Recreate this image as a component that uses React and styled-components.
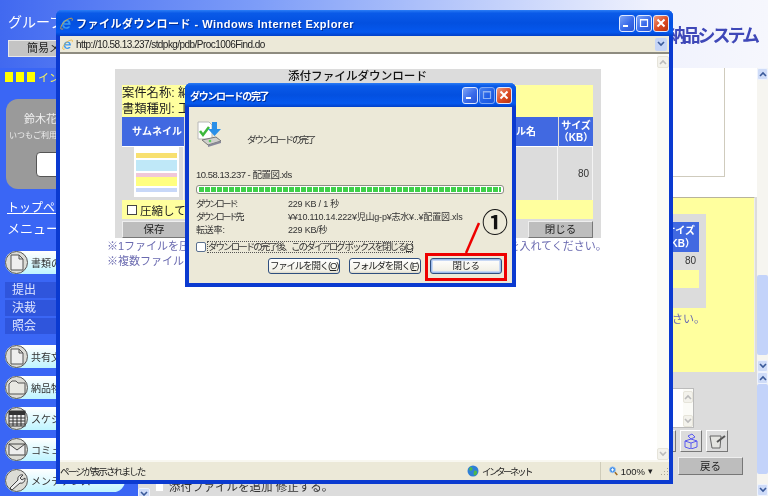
import styled, { createGlobalStyle } from 'styled-components';

const Global = createGlobalStyle`
  html, body { margin: 0; padding: 0; background: #fff; }
  body { font-family: "Liberation Sans", "Noto Sans CJK JP", sans-serif; }
  * { box-sizing: border-box; }
`;

const Page = styled.div`
  position: relative;
  width: 768px;
  height: 496px;
  overflow: hidden;
  display: grid;
  grid-template-columns: 138px 1fr;
  grid-template-rows: 68px 1fr;
  background: #3a66f5;
  filter: blur(0.35px);
`;

/* ---------- page behind the popups ---------- */

const Header = styled.header`
  grid-column: 1 / 3;
  display: flex;
  justify-content: flex-end;
  padding: 24px 11px 0 0;
  background: linear-gradient(90deg, #4169f0 0%, #7c9cf8 33%, #c6d3fb 66%, #f0f2fd 85%, #f6f7fd 100%);
`;

const Logo = styled.div`
  font-size: 18px;
  line-height: 24px;
  font-weight: 700;
  letter-spacing: -3px;
  color: #3f48b8;
`;

const Sidebar = styled.nav`
  display: flex;
  flex-direction: column;
  margin-top: -68px;
  padding: 14px 13px 0 5px;
`;

const GroupTitle = styled.div`
  color: #fff;
  font-size: 14px;
  line-height: 16px;
  padding-left: 3px;
  white-space: nowrap;
`;

const EasyButton = styled.div`
  margin: 10px 0 0 3px;
  height: 17px;
  width: 80px;
  background: #c4c4c4;
  border: 1px solid #e8e8e8;
  font-size: 11px;
  line-height: 15px;
  padding-left: 18px;
  color: #222;
  white-space: nowrap;
`;

const InfoLine = styled.div`
  display: flex;
  align-items: center;
  gap: 3px;
  margin-top: 14px;
  color: #f4f060;
  font-size: 11px;
  height: 12px;
  white-space: nowrap;
`;

const YellowSquare = styled.i`
  width: 8px;
  height: 10px;
  flex: none;
  background: #ffff00;
`;

const UserCard = styled.div`
  margin: 16px 0 0 1px;
  height: 90px;
  border-radius: 12px;
  background: #9a9a9a;
  color: #eee;
  padding: 11px 0 0 18px;
  font-size: 11px;
  white-space: nowrap;
`;

const UserHint = styled.div`
  font-size: 8px;
  margin: 3px 0 0 -15px;
`;

const UserButton = styled.div`
  width: 40px;
  height: 25px;
  margin: 12px 0 0 12px;
  background: #fff;
  border: 1px solid #555;
  border-radius: 4px;
`;

const TopLink = styled.div`
  margin-top: 12px;
  color: #fff;
  font-size: 12px;
  line-height: 14px;
  padding-left: 2px;
  text-decoration: underline;
`;

const MenuLabel = styled.div`
  margin-top: 6px;
  margin-bottom: 15px;
  color: #fff;
  font-size: 13px;
  line-height: 15px;
  padding-left: 2px;
`;

const Pill = styled.div`
  display: flex;
  align-items: center;
  gap: 3px;
  height: 23px;
  margin-bottom: 8px;
  border-radius: 12px;
  background: linear-gradient(180deg, #ffffff, #bff4ff);
  color: #333;
  font-size: 10px;
  white-space: nowrap;
`;

const RoundIcon = styled.span`
  width: 23px;
  height: 23px;
  flex: none;
  display: flex;
  align-items: center;
  justify-content: center;
  border-radius: 50%;
  border: 1px solid #555;
  background: #dcdcd6;
`;

const SubList = styled.div`
  margin-bottom: 9px;
`;

const SubItem = styled.div`
  height: 16px;
  margin-bottom: 2px;
  padding-left: 7px;
  background: #2f55dc;
  color: #dfe6ff;
  font-size: 12px;
  line-height: 16px;
`;

const Main = styled.main`
  display: grid;
  grid-template-columns: 1fr 11px;
  background: #dcdcdc;
  min-height: 0;
`;

const MainScroll = styled.div`
  display: flex;
  flex-direction: column;
  background: #f6f5f0;
`;

const MainBody = styled.div`
  display: flex;
  flex-direction: column;
  align-items: stretch;
`;

const UpperBlock = styled.div`
  height: 129px;
  flex: none;
  display: flex;
  background: #fff;
  padding-bottom: 20px;
`;

const MemoBox = styled.div`
  width: 587px;
  background: #fff;
  border-right: 1px solid #cfcbbd;
  border-bottom: 1px solid #cfcbbd;
`;

const YellowBlock = styled.div`
  height: 175px;
  flex: none;
  background: #ffff9e;
  border-top: 1px solid #b8b49c;
  border-right: 1px solid #eee;
  display: flex;
  flex-direction: column;
  align-items: flex-start;
  padding: 16px 0 0 0;
  margin-right: 2px;
`;

const BackTable = styled.div`
  margin-left: 470px;
  width: 98px;
  height: 94px;
  background: #dcdcdc;
  padding: 8px 7px 0 0;
`;

const BackHead = styled.div`
  height: 30px;
  background: #4169e1;
  color: #fff;
  font-size: 10px;
  font-weight: 700;
  line-height: 13px;
  text-align: right;
  padding: 2px 4px 0 0;
`;

const BackCell = styled.div`
  height: 18px;
  text-align: right;
  padding-right: 3px;
  font-size: 10px;
  line-height: 18px;
  color: #333;
`;

const BackYellow = styled.div`
  height: 18px;
  background: #ffff9e;
`;

const BackNote = styled.div`
  margin: 3px 0 0 512px;
  font-size: 11px;
  line-height: 16px;
  color: #6a6ab0;
  white-space: nowrap;
`;

const LowerBlock = styled.div`
  flex: 1;
  position: relative;
  display: flex;
  flex-direction: column;
  align-items: flex-end;
  padding: 16px 14px 0 0;
`;

const SmallMemo = styled.div`
  width: 50px;
  height: 40px;
  margin-right: 49px;
  background: #fff;
  border: 1px solid #bbb;
  display: flex;
  justify-content: flex-end;
`;

const ToolRow = styled.div`
  display: flex;
  gap: 4px;
  margin: 2px 15px 0 0;
`;

const ToolButton = styled.div`
  width: 22px;
  height: 22px;
  background: #dcdcdc;
  border: 1px solid #fff;
  border-right-color: #777;
  border-bottom-color: #777;
  display: flex;
  align-items: center;
  justify-content: center;
`;

const BackButton = styled.div`
  width: 65px;
  height: 18px;
  margin-top: 5px;
  background: #bdbdbd;
  border: 1px solid #eee;
  border-right-color: #777;
  border-bottom-color: #777;
  text-align: center;
  font-size: 10.500px;
  line-height: 16px;
  color: #222;
`;

const BottomOption = styled.div`
  position: absolute;
  left: 0;
  bottom: 0;
  height: 20px;
  display: flex;
  align-items: flex-start;
  gap: 5px;
  font-size: 11.500px;
  line-height: 15px;
  color: #333;
  white-space: nowrap;
`;

const BottomArrow = styled.div`
  align-self: flex-end;
  width: 12px;
  height: 12px;
  display: flex;
  align-items: center;
  justify-content: center;
  background: #cfdcf8;
  border: 1px solid #eef3fe;
  border-radius: 2px;
`;

const BottomCheck = styled.span`
  width: 9px;
  height: 9px;
  margin-top: 3px;
  background: #fff;
  border: 1px solid #ddd;
`;

const ScrollBtn = styled.div`
  height: 12px;
  flex: none;
  display: flex;
  align-items: center;
  justify-content: center;
  background: ${(p) => (p.$muted ? '#f3f2ec' : '#cfdcf8')};
  border: 1px solid ${(p) => (p.$muted ? '#e6e4da' : '#eef3fe')};
  border-radius: 2px;
`;

const ScrollThumb = styled.div`
  flex: ${(p) => (p.$h ? 'none' : 1)};
  height: ${(p) => (p.$h ? p.$h + 'px' : 'auto')};
  background: ${(p) => (p.$empty ? 'transparent' : '#c3d3fa')};
  border-radius: 2px;
`;

/* ---------- shared XP chrome ---------- */

const XpWindow = styled.div`
  position: absolute;
  display: flex;
  flex-direction: column;
  left: ${(p) => p.$left}px;
  top: ${(p) => p.$top}px;
  width: ${(p) => p.$w}px;
  height: ${(p) => p.$h}px;
  background: #0b3ad0;
  border-radius: 6px 6px 0 0;
  padding: 0 4px 4px;
  box-shadow: inset 0 1px 0 #3a80f5;
`;

const TitleBar = styled.div`
  flex: none;
  height: ${(p) => p.$h}px;
  margin: 0 -4px;
  padding: 0 4px;
  display: flex;
  align-items: center;
  border-radius: 6px 6px 0 0;
  background: linear-gradient(180deg, #2b7df5 0%, #0a5ae8 12%, #0350e0 50%, #0558ee 85%, #0240c8 100%);
`;

const TitleText = styled.div`
  flex: 1;
  margin-left: ${(p) => p.$indent ?? 3}px;
  color: #fff;
  font-size: ${(p) => p.$size || 11}px;
  font-weight: 700;
  letter-spacing: ${(p) => p.$spacing || 0}px;
  text-shadow: 1px 1px 0 #00309c;
  white-space: nowrap;
`;

const CaptionButton = styled.div`
  width: 16px;
  height: 17px;
  flex: none;
  margin-left: 1px;
  display: flex;
  align-items: center;
  justify-content: center;
  border: 1px solid #dfe8ff;
  border-radius: 3px;
  background: ${(p) =>
    p.$close
      ? 'linear-gradient(135deg, #ef9a7c, #dc4a22 55%, #b8330f)'
      : 'linear-gradient(135deg, #7ea4f5, #3a6bea 55%, #2a56d4)'};
  opacity: ${(p) => (p.$disabled ? 0.55 : 1)};
`;

/* ---------- IE window ---------- */

const AddressBar = styled.div`
  flex: none;
  height: 18px;
  display: flex;
  align-items: center;
  gap: 3px;
  padding: 0 2px;
  background: #ece9d8;
  border-bottom: 2px solid #8e8c80;
  font-size: 10px;
  color: #222;
`;

const AddressText = styled.div`
  flex: 1;
  letter-spacing: -0.55px;
  white-space: nowrap;
`;

const DropArrow = styled.div`
  width: 12px;
  height: 13px;
  display: flex;
  align-items: center;
  justify-content: center;
  background: #c6d5f7;
  border-radius: 2px;
`;

const Viewport = styled.div`
  flex: 1;
  min-height: 0;
  display: grid;
  grid-template-columns: 1fr 12px;
  background: #fff;
`;

const Document = styled.div`
  display: flex;
  flex-direction: column;
  align-items: center;
  padding: 15px 1px 0 0;
  min-width: 0;
`;

const ViewScroll = styled.div`
  display: flex;
  flex-direction: column;
  background: #fbfbf7;
  padding: 2px 0 0;
`;

const GreyPanel = styled.section`
  width: 486px;
  height: 169px;
  flex: none;
  background: #dcdcdc;
  padding: 0 8px 0 7px;
`;

const PanelTitle = styled.h1`
  margin: 0;
  height: 16px;
  text-align: center;
  font-size: 11.600px;
  font-weight: 500;
  line-height: 14px;
  color: #111;
`;

const YellowHead = styled.div`
  height: 32px;
  background: #ffff9e;
  font-size: 12.300px;
  line-height: 16px;
  color: #222;
`;

const FileGrid = styled.div`
  display: grid;
  grid-template-columns: 62px 1fr 34px;
  column-gap: 1px;
`;

const HeadCell = styled.div`
  height: 30px;
  background: #4169e1;
  border-bottom: 1px solid #fff;
  color: #fff;
  font-size: 10px;
  font-weight: 700;
  line-height: 12px;
  display: flex;
  align-items: center;
  justify-content: ${(p) => p.$align || 'center'};
  text-align: center;
  white-space: nowrap;
  padding: 0 ${(p) => p.$padr || 0}px 0 ${(p) => p.$pad || 0}px;
`;

const DataCell = styled.div`
  height: 53px;
  background: #dcdcdc;
  border-right: 1px solid #f4f4f4;
  display: flex;
  justify-content: ${(p) => p.$align || 'center'};
  align-items: ${(p) => p.$valign || 'stretch'};
  font-size: 10px;
  color: #333;
  padding-right: ${(p) => p.$pad || 0}px;
`;

const Thumbnail = styled.div`
  width: 45px;
  margin-left: 12px;
  height: 50px;
  background:
    linear-gradient(180deg,
      #fff 0 8%, #f8e070 8% 20%, #fff 20% 24%, #bfe8f8 24% 48%,
      #fff 48% 52%, #f0c8d8 52% 60%, #ffff80 60% 80%, #fff 80% 84%, #c8d8f8 84% 94%, #fff 94%);
  border: 2px solid #fff;
`;

const OptionRow = styled.div`
  height: 19px;
  background: #ffff9e;
  display: flex;
  align-items: center;
  gap: 3px;
  padding-left: 5px;
  font-size: 11.500px;
  color: #222;
`;

const CheckSquare = styled.span`
  width: 10px;
  height: 10px;
  flex: none;
  background: #fff;
  border: 1px solid ${(p) => p.$color || '#444'};
  border-radius: ${(p) => p.$radius || 0}px;
`;

const ActionRow = styled.div`
  display: flex;
  justify-content: space-between;
  padding-top: 2px;
`;

const GreyButton = styled.div`
  width: ${(p) => p.$w}px;
  height: 17px;
  background: #bdbdbd;
  border: 1px solid #eee;
  border-right-color: #777;
  border-bottom-color: #777;
  text-align: center;
  font-size: 10.500px;
  line-height: 15px;
  color: #222;
`;

const Notes = styled.div`
  align-self: flex-start;
  margin: 1px 0 0 47px;
  font-size: 11px;
  line-height: 15px;
  color: #6a6ab0;
  white-space: nowrap;
`;

const StatusBar = styled.div`
  flex: none;
  height: 20px;
  display: grid;
  grid-template-columns: 407px 133px 45px 1fr;
  align-items: center;
  background: #ece9d8;
  border-top: 2px solid #f8f7f0;
  font-size: 9.500px;
  color: #222;
`;

const StatusCell = styled.div`
  display: flex;
  align-items: center;
  gap: 3px;
  height: 100%;
  border-left: ${(p) => (p.$divided ? '1px solid #cfccba' : 'none')};
  padding-left: ${(p) => (p.$divided ? 8 : 0)}px;
  letter-spacing: ${(p) => p.$spacing || 0}px;
  white-space: nowrap;
`;

const GripCell = styled.div`
  display: flex;
  align-items: center;
  justify-content: space-between;
  height: 100%;
  padding-left: 3px;
  font-size: 9px;
`;

/* ---------- download dialog ---------- */

const DialogBody = styled.div`
  flex: 1;
  background: #ece9d8;
  padding: 11px 2px 0 7px;
  font-size: 9px;
  color: #333;
`;

const DialogHero = styled.div`
  display: flex;
  align-items: flex-end;
  gap: 24px;
  height: 30px;
`;

const HeroText = styled.div`
  font-size: 9.500px;
  line-height: 11px;
  letter-spacing: -2px;
  padding-bottom: 3px;
`;

const FileLine = styled.div`
  margin-top: 21px;
  font-size: 9.500px;
  line-height: 12px;
  letter-spacing: -0.5px;
`;

const Progress = styled.div`
  width: 308px;
  height: 9px;
  margin-top: 4px;
  padding: 1px 2px;
  border: 1px solid #8d8d85;
  border-radius: 3px;
  background: #fff;
`;

const ProgressFill = styled.div`
  height: 100%;
  background: repeating-linear-gradient(90deg, #3fd04a 0 5px, #fff 5px 6px);
`;

const Stats = styled.dl`
  margin: 4px 0 0;
  display: grid;
  grid-template-columns: 92px 1fr;
  grid-auto-rows: 13px;
  line-height: 13px;
  letter-spacing: -0.2px;
  white-space: nowrap;
`;

const StatKey = styled.dt`
  margin: 0;
  letter-spacing: ${(p) => (p.$kana ? '-2.400px' : '-0.2px')};
`;

const StatValue = styled.dd`
  margin: 0;
`;

const KeepOpen = styled.label`
  display: flex;
  align-items: center;
  gap: 1px;
  margin-top: 4px;
  height: 11px;
  letter-spacing: -1.950px;
  font-size: 9.500px;
  white-space: nowrap;
`;

const KeepText = styled.span`
  border: 1px dotted #555;
  line-height: 10px;
`;

const DialogButtons = styled.div`
  display: flex;
  justify-content: flex-end;
  gap: 9px;
  margin-top: 6px;
  padding-right: 8px;
`;

const XpButton = styled.div`
  width: 72px;
  height: 16px;
  text-align: center;
  font-size: 9.500px;
  line-height: 13px;
  letter-spacing: ${(p) => (p.$primary ? '-0.5px' : '-1.200px')};
  white-space: nowrap;
  color: #222;
  background: linear-gradient(180deg, #fff, #f2f0e6 85%, #dcd8c8);
  border: 1px solid #2f4f7f;
  border-radius: 3px;
  box-shadow: ${(p) => (p.$primary ? 'inset 0 0 0 1px #9dbcec, inset 0 0 0 2px #c8d8f4' : 'none')};
`;

/* ---------- annotation on top of the picture ---------- */

const RedFrame = styled.div`
  position: absolute;
  left: 425px;
  top: 253px;
  width: 82px;
  height: 28px;
  border: 3px solid #ee0000;
`;

const Leader = styled.svg`
  position: absolute;
  left: 460px;
  top: 218px;
`;

const CalloutNumber = styled.div`
  position: absolute;
  left: 482px;
  top: 207px;
  font-size: 26px;
  line-height: 32px;
  font-weight: 700;
  color: #111;
`;

const ChevUp = ({ color = '#3a5a9a' }) => (
  <svg width="8" height="6" viewBox="0 0 8 6"><path d="M1 5l3-3 3 3" fill="none" stroke={color} strokeWidth="1.6" /></svg>
);
const ChevDown = ({ color = '#3a5a9a' }) => (
  <svg width="8" height="6" viewBox="0 0 8 6"><path d="M1 1l3 3 3-3" fill="none" stroke={color} strokeWidth="1.6" /></svg>
);

const IeLogo = ({ size = 13 }) => (
  <svg width={size} height={size} viewBox="0 0 16 16">
    <path d="M3 9.500h10c.3-3.500-1.800-6-5-6-3.400 0-5.600 2.800-5.400 6 .2 3 2.400 5 5.300 5 2.200 0 3.800-1 4.600-2.800h-2.700c-.5.7-1.100 1-2 1-1.400 0-2.400-1-2.600-2.200M5.300 7.600c.3-1.300 1.300-2.100 2.600-2.100s2.300.8 2.500 2.100z" fill="#3a9af0" fillRule="evenodd" />
    <path d="M1 13C2 8 8 2 14 1.500c1.500 0 1.500 1.500.8 3M1 13c-.5 2 1 2.500 3 1.500" fill="none" stroke="#f0b020" strokeWidth="1" />
  </svg>
);

const MinGlyph = () => <svg width="10" height="10" viewBox="0 0 10 10"><rect x="1" y="7" width="5" height="2" fill="#fff" /></svg>;
const MaxGlyph = () => <svg width="10" height="10" viewBox="0 0 10 10"><path d="M1.500 1.500h7v7h-7z M1 2h8" fill="none" stroke="#fff" strokeWidth="1.200" /></svg>;
const CloseGlyph = () => <svg width="10" height="10" viewBox="0 0 10 10"><path d="M1.500 1.500l7 7M8.500 1.500l-7 7" stroke="#fff" strokeWidth="2" /></svg>;

const DocIcon = () => (
  <svg width="14" height="17" viewBox="0 0 14 17"><path d="M1 1h8l4 4v11H1z M9 1v4h4" fill="#eee" stroke="#555" /></svg>
);
const FolderIcon = () => (
  <svg width="18" height="15" viewBox="0 0 18 15"><path d="M1 14V4l3-3h4l2 2h7v11z" fill="#e8e8e2" stroke="#555" /></svg>
);
const CalendarIcon = () => (
  <svg width="18" height="17" viewBox="0 0 18 17">
    <rect x="1" y="1" width="16" height="15" fill="#eee" stroke="#333" />
    <rect x="1" y="1" width="16" height="4" fill="#333" />
    <path d="M1 8h16M1 11h16M1 14h16M5 5v11M9 5v11M13 5v11" stroke="#333" />
  </svg>
);
const MailIcon = () => (
  <svg width="18" height="13" viewBox="0 0 18 13"><path d="M1 1h16v11H1z M1 1l8 6 8-6" fill="#eee" stroke="#444" /></svg>
);
const WrenchIcon = () => (
  <svg width="18" height="18" viewBox="0 0 18 18">
    <path d="M2 16l8-8c-1-3 2-6 5-5l-3 3 2 2 3-2c.5 3-2 6-5 5l-8 7z" fill="#eee" stroke="#444" />
  </svg>
);

const DownloadIcon = () => (
  <svg width="27" height="27" viewBox="0 0 27 27">
    <path d="M2 1h11l3 3v14H2z" fill="#fff" stroke="#b8b8b8" />
    <path d="M4 10l3 4 6-8" fill="none" stroke="#3cb83c" strokeWidth="2.500" />
    <path d="M16 1h5v7h4l-6.500 7L12 8h4z" fill="#2a8fe8" />
    <path d="M6 19l14-3 5 4-13 4z" fill="#d0d0cc" stroke="#777" />
    <path d="M12 24l13-4v2l-13 4z" fill="#889" />
    <circle cx="14" cy="20" r="1.300" fill="#5cd05c" />
  </svg>
);

const ZoomIcon = () => (
  <svg width="11" height="12" viewBox="0 0 11 12">
    <circle cx="4.500" cy="4.500" r="3.800" fill="#3a8ae8" stroke="#a8c8f0" />
    <path d="M4.500 2.500v4M2.500 4.500h4" stroke="#fff" strokeWidth="1.200" />
    <path d="M7.500 7.500l3 3.500" stroke="#a06a20" strokeWidth="2" />
  </svg>
);

const GlobeIcon = () => (
  <svg width="12" height="12" viewBox="0 0 12 12">
    <circle cx="6" cy="6" r="5.500" fill="#2f7fd8" />
    <path d="M3 2c2 0 3 1 2.500 2.500S3 6 2 5M7 6c2-1 3.500 0 3 2s-2 3-3 2 0-2 0-4" fill="#4cb84c" />
  </svg>
);

const GripIcon = () => (
  <svg width="9" height="9" viewBox="0 0 9 9">
    <path d="M7 1h1v1H7zM4 4h1v1H4zM7 4h1v1H7zM1 7h1v1H1zM4 7h1v1H4zM7 7h1v1H7z" fill="#a8a595" />
  </svg>
);

const BoxTool = () => (
  <svg width="16" height="16" viewBox="0 0 16 16"><path d="M2 8l6-2 6 2v6l-6 2-6-2z M2 8l6 2 6-2 M8 10v6 M5 3l4-2 3 3-4 2z" fill="none" stroke="#5a5af0" /></svg>
);
const NoteTool = () => (
  <svg width="17" height="16" viewBox="0 0 17 16"><path d="M1 3h11l-1 12H3z" fill="#e4e4e0" stroke="#666" /><path d="M8 9l8-6" stroke="#555" strokeWidth="2" /></svg>
);

const lowerMenus = [
  { label: '共有文書', icon: <DocIcon /> },
  { label: '納品物', icon: <FolderIcon /> },
  { label: 'スケジュール', icon: <CalendarIcon /> },
  { label: 'コミュニケーション', icon: <MailIcon /> },
  { label: 'メンテナンス', icon: <WrenchIcon /> },
];

export default function App() {
  return (
    <Page>
      <Global />
      <Header>
        <Logo>納品システム</Logo>
      </Header>

      <Sidebar>
        <GroupTitle>グループ</GroupTitle>
        <EasyButton>簡易メニュー</EasyButton>
        <InfoLine>
          <YellowSquare />
          <YellowSquare />
          <YellowSquare />
          インフォメーション
        </InfoLine>
        <UserCard>
          鈴木花子 様
          <UserHint>いつもご利用ありがとうございます</UserHint>
          <UserButton />
        </UserCard>
        <TopLink>トップページ</TopLink>
        <MenuLabel>メニュー</MenuLabel>
        <Pill>
          <RoundIcon><DocIcon /></RoundIcon>
          書類の管理
        </Pill>
        <SubList>
          <SubItem>提出</SubItem>
          <SubItem>決裁</SubItem>
          <SubItem>照会</SubItem>
        </SubList>
        {lowerMenus.map((m) => (
          <Pill key={m.label}>
            <RoundIcon>{m.icon}</RoundIcon>
            {m.label}
          </Pill>
        ))}
      </Sidebar>

      <Main>
        <MainBody>
          <UpperBlock>
            <MemoBox />
          </UpperBlock>
          <YellowBlock>
            <BackTable>
              <BackHead>サイズ<br />（KB）</BackHead>
              <BackCell>80</BackCell>
              <BackYellow />
            </BackTable>
            <BackNote>ください。</BackNote>
          </YellowBlock>
          <LowerBlock>
            <SmallMemo>
              <ViewScroll>
                <ScrollBtn $muted><ChevUp color="#bbb" /></ScrollBtn>
                <ScrollThumb $empty />
                <ScrollBtn $muted><ChevDown color="#bbb" /></ScrollBtn>
              </ViewScroll>
            </SmallMemo>
            <ToolRow>
              <ToolButton />
              <ToolButton><BoxTool /></ToolButton>
              <ToolButton><NoteTool /></ToolButton>
            </ToolRow>
            <BackButton>戻る</BackButton>
            <BottomOption>
              <BottomArrow><ChevDown /></BottomArrow>
              <BottomCheck />
              添付ファイルを追加 修正する。
            </BottomOption>
          </LowerBlock>
        </MainBody>
        <MainScroll>
          <ScrollBtn><ChevUp /></ScrollBtn>
          <ScrollThumb $h={195} $empty />
          <ScrollThumb $h={80} />
          <ScrollThumb $h={5} $empty />
          <ScrollBtn><ChevDown /></ScrollBtn>
          <ScrollBtn><ChevUp /></ScrollBtn>
          <ScrollThumb $h={90} />
          <ScrollThumb $h={10} $empty />
          <ScrollBtn><ChevDown /></ScrollBtn>
        </MainScroll>
      </Main>

      <XpWindow $left={56} $top={10} $w={617} $h={474}>
        <TitleBar $h={26}>
          <IeLogo />
          <TitleText $spacing={0.5}>ファイルダウンロード - Windows Internet Explorer</TitleText>
          <CaptionButton><MinGlyph /></CaptionButton>
          <CaptionButton><MaxGlyph /></CaptionButton>
          <CaptionButton $close><CloseGlyph /></CaptionButton>
        </TitleBar>
        <AddressBar>
          <IeLogo size={11} />
          <AddressText>http://10.58.13.237/stdpkg/pdb/Proc1006Find.do</AddressText>
          <DropArrow><ChevDown /></DropArrow>
        </AddressBar>
        <Viewport>
          <Document>
            <GreyPanel>
              <PanelTitle>添付ファイルダウンロード</PanelTitle>
              <YellowHead>
                案件名称: 納品物一覧<br />
                書類種別: 工事関連書類
              </YellowHead>
              <FileGrid>
                <HeadCell $pad={8}>サムネイル</HeadCell>
                <HeadCell $align="flex-end" $padr={22}>ファイル名</HeadCell>
                <HeadCell>サイズ<br />（KB）</HeadCell>
                <DataCell $align="flex-start"><Thumbnail /></DataCell>
                <DataCell />
                <DataCell $align="flex-end" $valign="center" $pad={3}>80</DataCell>
              </FileGrid>
              <OptionRow>
                <CheckSquare />
                圧縮して保存する
              </OptionRow>
              <ActionRow>
                <GreyButton $w={64}>保存</GreyButton>
                <GreyButton $w={65}>閉じる</GreyButton>
              </ActionRow>
            </GreyPanel>
            <Notes>
              ※1ファイルを圧縮して保存する場合は、圧縮保存のチェックボックスにチェックを入れてください。<br />
              ※複数ファイルを保存する場合は、圧縮してください。
            </Notes>
          </Document>
          <ViewScroll>
            <ScrollBtn $muted><ChevUp color="#bbb" /></ScrollBtn>
            <ScrollThumb $empty />
            <ScrollBtn $muted><ChevDown color="#bbb" /></ScrollBtn>
          </ViewScroll>
        </Viewport>
        <StatusBar>
          <StatusCell $spacing={-1.8}>ページが表示されました</StatusCell>
          <StatusCell $spacing={-2.5}><GlobeIcon />インターネット</StatusCell>
          <StatusCell $divided><ZoomIcon />100%</StatusCell>
          <GripCell>▾<GripIcon /></GripCell>
        </StatusBar>
      </XpWindow>

      <XpWindow $left={185} $top={83} $w={331} $h={204}>
        <TitleBar $h={24}>
          <TitleText $size={10} $spacing={-1.3} $indent={1}>ダウンロードの完了</TitleText>
          <CaptionButton><MinGlyph /></CaptionButton>
          <CaptionButton $disabled><MaxGlyph /></CaptionButton>
          <CaptionButton $close><CloseGlyph /></CaptionButton>
        </TitleBar>
        <DialogBody>
          <DialogHero>
            <DownloadIcon />
            <HeroText>ダウンロードの完了</HeroText>
          </DialogHero>
          <FileLine>10.58.13.237 - 配置図.xls</FileLine>
          <Progress><ProgressFill /></Progress>
          <Stats>
            <StatKey $kana>ダウンロード:</StatKey>
            <StatValue>229 KB / 1 秒</StatValue>
            <StatKey $kana>ダウンロード先:</StatKey>
            <StatValue>¥¥10.110.14.222¥児山g-p¥志水¥..¥配置図.xls</StatValue>
            <StatKey>転送率:</StatKey>
            <StatValue>229 KB/秒</StatValue>
          </Stats>
          <KeepOpen>
            <CheckSquare $color="#5a7090" $radius={2} />
            <KeepText>ダウンロードの完了後、このダイアログ ボックスを閉じる(<u>C</u>)</KeepText>
          </KeepOpen>
          <DialogButtons>
            <XpButton>ファイルを開く(<u>O</u>)</XpButton>
            <XpButton>フォルダを開く(<u>F</u>)</XpButton>
            <XpButton $primary>閉じる</XpButton>
          </DialogButtons>
        </DialogBody>
      </XpWindow>

      <RedFrame />
      <Leader width="24" height="38" viewBox="0 0 24 38">
        <path d="M19 5L6 35" stroke="#ee0000" strokeWidth="2.500" />
      </Leader>
      <CalloutNumber>①</CalloutNumber>
    </Page>
  );
}
